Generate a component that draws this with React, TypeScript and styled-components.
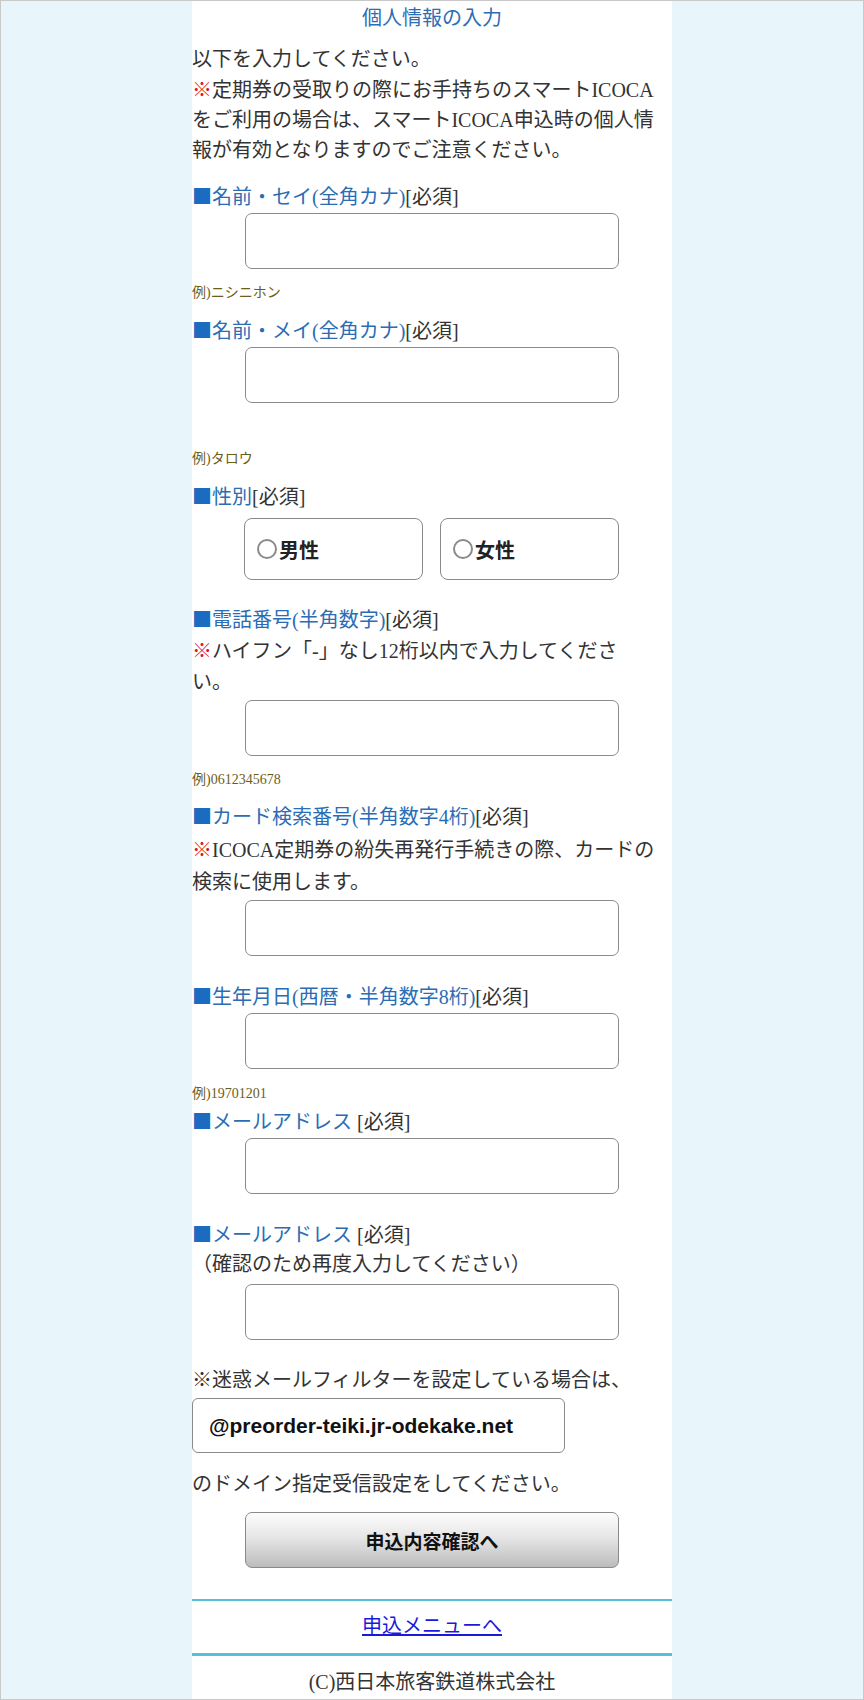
import React from "react";
import styled, { createGlobalStyle } from "styled-components";

const GlobalStyle = createGlobalStyle`
  html, body {
    margin: 0;
    padding: 0;
  }
  body {
    background: #e8f6fc;
    font-family: "Liberation Serif", "Noto Sans CJK JP", serif;
    color: #333;
  }
  body::after {
    content: "";
    position: fixed;
    inset: 0;
    border: 1px solid #c9c9c9;
    pointer-events: none;
  }
`;

const Page = styled.main`
  width: 480px;
  margin: 0 auto;
  background: #fff;
  display: flex;
  flex-direction: column;
  padding-bottom: 40px;
`;

const Title = styled.h1`
  margin: 3px 0 0;
  font-size: 20px;
  font-weight: normal;
  line-height: 30px;
  color: #2c6db4;
  text-align: center;
`;

/* glyphs are lifted 2px inside their box: the box keeps its height */
const Text = styled.p<{ $mt?: number; $lh?: number }>`
  margin: ${(p) => (p.$mt ?? 0) - 2}px 0 0;
  padding-bottom: 2px;
  font-size: 20px;
  line-height: ${(p) => p.$lh ?? 30}px;
  color: #333;
`;

const Label = styled.div<{ $mt: number }>`
  margin-top: ${(p) => p.$mt}px;
  font-size: 20px;
  line-height: 26px;
  height: 26px;
  padding-bottom: 4px;
  color: #333;
  white-space: nowrap;
`;

const Blue = styled.span`
  color: #2a6db5;
`;

const Square = styled.span`
  font-family: "Noto Sans CJK JP", sans-serif;
  color: #1b6cc0;
`;

const Red = styled.span`
  font-family: "Noto Sans CJK JP", sans-serif;
  color: #e3161c;
`;

const TextInput = styled.input<{ $mt?: number }>`
  display: block;
  box-sizing: border-box;
  margin: ${(p) => p.$mt ?? 0}px 0 0 53px;
  width: 374px;
  height: 56px;
  border: 1.5px solid #8a8a8a;
  border-radius: 7px;
  background: #fff;
  font-size: 20px;
  padding: 0 10px;
`;

const Example = styled.div<{ $mt: number }>`
  margin-top: ${(p) => p.$mt}px;
  font-size: 14px;
  line-height: 18px;
  height: 18px;
  color: #6b5d1a;
`;

const GenderRow = styled.div`
  margin: 5px 0 0 52px;
  display: flex;
  gap: 17px;
`;

const GenderOption = styled.label`
  box-sizing: border-box;
  width: 179px;
  height: 62px;
  border: 1.5px solid #8a8a8a;
  border-radius: 8px;
  display: flex;
  align-items: center;
  gap: 2px;
  padding: 0 0 0 12px;
  font-size: 20px;
  font-weight: bold;
  color: #222;
`;

const RadioCircle = styled.span`
  box-sizing: border-box;
  width: 20px;
  height: 20px;
  border: 2px solid #8a8a8a;
  border-radius: 50%;
  background: #fff;
`;

const DomainBox = styled.div`
  box-sizing: border-box;
  margin-top: 1px;
  width: 373px;
  height: 55px;
  border: 1.5px solid #8a8a8a;
  border-radius: 6px;
  display: flex;
  align-items: center;
  padding-left: 16px;
  font-family: "Liberation Sans", Arial, sans-serif;
  font-weight: bold;
  font-size: 21px;
  color: #111;
`;

const SubmitButton = styled.button`
  box-sizing: border-box;
  margin: 11px 0 0 53px;
  width: 374px;
  height: 56px;
  border: 1px solid #8a8a8a;
  border-radius: 7px;
  background: linear-gradient(#fdfdfd, #e6e6e6 45%, #bcbcbc);
  font-family: "Noto Sans CJK JP", sans-serif;
  font-weight: bold;
  font-size: 19px;
  color: #111;
  cursor: pointer;
`;

const Divider = styled.div<{ $mt: number; $thick: number }>`
  margin-top: ${(p) => p.$mt}px;
  height: ${(p) => p.$thick}px;
  background: #55c1d8;
`;

const MenuLink = styled.a`
  display: block;
  margin-top: 12px;
  align-self: center;
  font-size: 20px;
  line-height: 26px;
  padding-bottom: 4px;
  color: #1a1adb;
  text-decoration: underline;
`;

const Copyright = styled.div`
  margin-top: 13px;
  text-align: center;
  font-size: 20px;
  line-height: 26px;
  padding-bottom: 4px;
  color: #333;
`;

const Heading: React.FC<{ mt: number; children: React.ReactNode; gap?: boolean }> = ({
  mt,
  children,
  gap,
}) => (
  <Label $mt={mt}>
    <Square>■</Square>
    <Blue>{children}</Blue>
    {gap ? " " : ""}[必須]
  </Label>
);

export default function App() {
  return (
    <>
      <GlobalStyle />
      <Page>
        <Title>個人情報の入力</Title>
        <Text $mt={13}>
          以下を入力してください。
          <br />
          <Red>※</Red>定期券の受取りの際にお手持ちのスマートICOCA
          <br />
          をご利用の場合は、スマートICOCA申込時の個人情
          <br />
          報が有効となりますのでご注意ください。
        </Text>

        <Heading mt={16}>名前・セイ(全角カナ)</Heading>
        <TextInput type="text" />
        <Example $mt={15}>例)ニシニホン</Example>

        <Heading mt={15}>名前・メイ(全角カナ)</Heading>
        <TextInput type="text" />
        <Example $mt={47}>例)タロウ</Example>

        <Heading mt={15}>性別</Heading>
        <GenderRow>
          <GenderOption>
            <RadioCircle />
            男性
          </GenderOption>
          <GenderOption>
            <RadioCircle />
            女性
          </GenderOption>
        </GenderRow>

        <Heading mt={26}>電話番号(半角数字)</Heading>
        <Text $lh={31}>
          <Red>※</Red>ハイフン「-」なし12桁以内で入力してくださ
          <br />
          い。
        </Text>
        <TextInput type="text" />
        <Example $mt={15}>例)0612345678</Example>

        <Heading mt={14}>カード検索番号(半角数字4桁)</Heading>
        <Text $mt={2} $lh={31.5}>
          <Red>※</Red>ICOCA定期券の紛失再発行手続きの際、カードの
          <br />
          検索に使用します。
        </Text>
        <TextInput type="text" />

        <Heading mt={27}>生年月日(西暦・半角数字8桁)</Heading>
        <TextInput type="text" />
        <Example $mt={16}>例)19701201</Example>

        <Heading mt={5} gap>
          メールアドレス
        </Heading>
        <TextInput type="text" />

        <Heading mt={27} gap>
          メールアドレス
        </Heading>
        <Text>（確認のため再度入力してください）</Text>
        <TextInput type="text" $mt={3} />

        <Text $mt={27}>※迷惑メールフィルターを設定している場合は、</Text>
        <DomainBox>@preorder-teiki.jr-odekake.net</DomainBox>
        <Text $mt={18}>のドメイン指定受信設定をしてください。</Text>
        <SubmitButton type="button">申込内容確認へ</SubmitButton>

        <Divider $mt={31} $thick={2} />
        <MenuLink href="#">申込メニューへ</MenuLink>
        <Divider $mt={10} $thick={3} />
        <Copyright>(C)西日本旅客鉄道株式会社</Copyright>
      </Page>
    </>
  );
}
